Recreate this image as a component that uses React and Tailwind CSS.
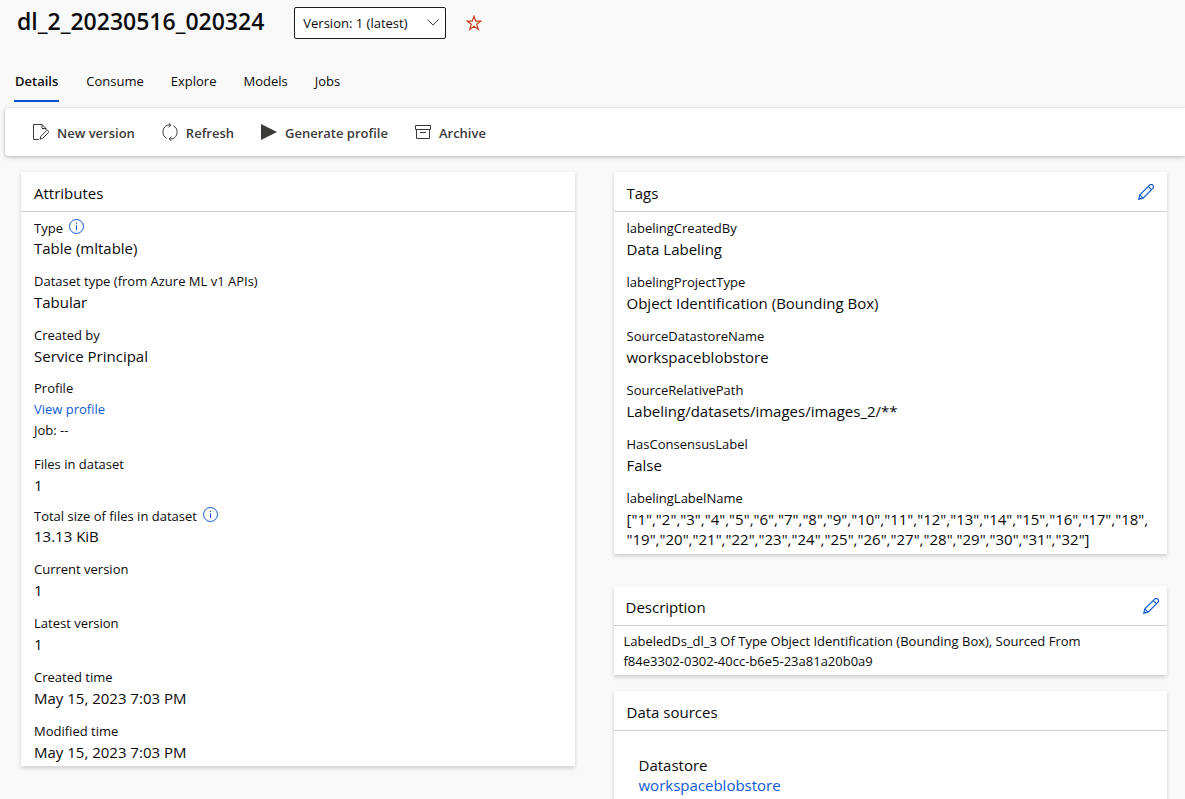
import React, { Fragment } from "react";

const tabs = ["Details", "Consume", "Explore", "Models", "Jobs"];

const tags = [
  ["labelingCreatedBy", "Data Labeling"],
  ["labelingProjectType", "Object Identification (Bounding Box)"],
  ["SourceDatastoreName", "workspaceblobstore"],
  ["SourceRelativePath", "Labeling/datasets/images/images_2/**"],
  ["HasConsensusLabel", "False"],
];

const labelNames = Array.from({ length: 32 }, (_, i) => `"${i + 1}"`);

function NewVersionIcon() {
  return (
    <svg className="size-4" viewBox="0 0 16 16" fill="none" stroke="currentColor" aria-hidden="true">
      <path d="M6 15.500H.5V.5h8.500l4 4v1.500" />
      <path d="M9 .5v4h4" />
      <path d="M7 15.200l.8-2.800 5.600-5.600a1.300 1.300 0 0 1 1.900 1.900l-5.600 5.600z" />
    </svg>
  );
}

function RefreshIcon() {
  return (
    <svg className="h-[18px] w-4" viewBox="0 0 16 18" fill="none" stroke="currentColor" aria-hidden="true">
      <path d="M4.600 15.200A7.200 7.200 0 0 1 5.800 2.100h3M11.400 2.800A7.200 7.200 0 0 1 10.200 15.900h-3" />
      <path d="M6.600 0l2.300 2.100-2.300 2.300M9.400 18l-2.300-2.100 2.300-2.300" />
    </svg>
  );
}

function PlayIcon() {
  return (
    <svg className="size-4" viewBox="0 0 16 16" fill="currentColor" aria-hidden="true">
      <path d="M0 0l16 8-16 8z" />
    </svg>
  );
}

function ArchiveIcon() {
  return (
    <svg className="h-[14px] w-4" viewBox="0 0 16 14" fill="none" stroke="currentColor" aria-hidden="true">
      <path d="M.5.5h15v4H.5zM1.500 4.500v9h13v-9M5 7.500h6" />
    </svg>
  );
}

function PencilIcon() {
  return (
    <svg className="size-4" viewBox="0 0 16 16" fill="none" stroke="currentColor" strokeWidth="1.200" aria-hidden="true">
      <path d="M.8 15.200l1.100-4.300L11.600 1.200a2.200 2.200 0 0 1 3.200 3.200L5.100 14.100z" />
      <path d="M10.300 2.600l3.100 3.100M1.900 10.900l3.200 3.200" />
    </svg>
  );
}

function InfoButton({ label }) {
  return (
    <button type="button" aria-label={label} className="-mt-1 text-[#0f5bd7]">
      <svg className="size-[15px]" viewBox="0 0 15 15" fill="none" stroke="currentColor" aria-hidden="true">
        <circle cx="7.500" cy="7.500" r="7" />
        <path d="M7.500 6.200v5M7.500 3.800v1.200" />
      </svg>
    </button>
  );
}

function Command({ icon, children }) {
  return (
    <button type="button" className="flex items-center gap-2 text-[13px] leading-5 font-semibold text-[#3b3a39]">
      {icon}
      <span className="pt-0.5">{children}</span>
    </button>
  );
}

function Card({ title, onEdit, children, className = "", headerClassName = "px-[13px]" }) {
  return (
    <section className={`bg-white shadow-[0_2px_4px_rgba(0,0,0,0.18)] ${className}`}>
      <header className={`flex h-10 items-center justify-between border-b border-[#d0d0d0] pt-0.5 ${headerClassName}`}>
        <h2 className="text-[15px] leading-5">{title}</h2>
        {onEdit && (
          <button type="button" aria-label={onEdit} className="mb-0.5 text-[#0f5bd7]">
            <PencilIcon />
          </button>
        )}
      </header>
      {children}
    </section>
  );
}

function Field({ label, info, children }) {
  return (
    <div>
      <dt className={`flex items-center gap-[6px] text-[13px] ${info ? "leading-[19px]" : "leading-[22px]"}`}>
        {label}
        {info && <InfoButton label={info} />}
      </dt>
      <dd className="text-[15px] leading-5">{children}</dd>
    </div>
  );
}

export default function App() {
  return (
    <div className="h-screen overflow-hidden bg-[#f9f9f9] font-['Open_Sans','Noto_Sans',sans-serif] text-[#0b0b0b]">
      <header className="flex items-center pt-[7px] pl-[17px]">
        <h1 className="pb-1 text-[23px] leading-7 font-semibold">dl_2_20230516_020324</h1>
        <div className="relative ml-[30px]">
          <select
            aria-label="Version"
            className="block h-8 w-[152px] appearance-none rounded-xs border border-[#1b1b1b] bg-white pt-0.5 pl-2 text-[13px]"
          >
            <option>Version: 1 (latest)</option>
          </select>
          <svg
            className="pointer-events-none absolute top-3 right-[7px] h-[7px] w-3"
            viewBox="0 0 12 7"
            fill="none"
            stroke="#444"
            aria-hidden="true"
          >
            <path d="M.5.500L6 6l5.500-5.500" />
          </svg>
        </div>
        <button type="button" aria-label="Add to favorites" className="ml-5 text-[#c9401f]">
          <svg className="size-4" viewBox="0 0 16 16" fill="none" stroke="currentColor" strokeWidth="1.200" aria-hidden="true">
            <path d="M8 1.200l1.700 4.900h5.200l-4.200 3.100 1.600 5.200L8 11.300l-4.300 3.100 1.600-5.200-4.200-3.100h5.200z" />
          </svg>
        </button>
      </header>

      <nav className="mt-6 flex gap-[27px] pl-[14px] text-[13px] leading-5">
        {tabs.map((tab, i) => (
          <a
            key={tab}
            href={`#${tab.toLowerCase()}`}
            aria-current={i === 0 ? "page" : undefined}
            className={i === 0 ? "border-b-2 border-[#0b53ce] px-px pt-2 pb-[9px] font-semibold" : "pt-2 pb-[9px]"}
          >
            {tab}
          </a>
        ))}
      </nav>

      <div className="mt-[6px] ml-[5px] flex h-12 items-center gap-[27px] rounded-l bg-white pl-7 shadow-[0_1px_4px_rgba(0,0,0,0.28)]">
        <Command icon={<NewVersionIcon />}>New version</Command>
        <Command icon={<RefreshIcon />}>Refresh</Command>
        <Command icon={<PlayIcon />}>Generate profile</Command>
        <Command icon={<ArchiveIcon />}>Archive</Command>
      </div>

      <main className="mt-4 grid grid-cols-2 items-start gap-[39px] pr-[18px] pl-[21px]">
        <Card title="Attributes">
          <dl className="flex flex-col gap-3 px-[13px] pt-[7px] pb-1">
            <Field label="Type" info="About type">Table (mltable)</Field>
            <Field label="Dataset type (from Azure ML v1 APIs)">Tabular</Field>
            <Field label="Created by">Service Principal</Field>
            <div className="text-[13px] leading-[21px]">
              <dt>Profile</dt>
              <dd>
                <a href="#profile" className="text-[#0f5bd7]">View profile</a>
              </dd>
              <dd>Job: --</dd>
            </div>
            <Field label="Files in dataset">1</Field>
            <Field label="Total size of files in dataset" info="About total size">13.13 KiB</Field>
            <Field label="Current version">1</Field>
            <Field label="Latest version">1</Field>
            <Field label="Created time">May 15, 2023 7:03 PM</Field>
            <Field label="Modified time">May 15, 2023 7:03 PM</Field>
          </dl>
        </Card>

        <div>
          <Card title="Tags" onEdit="Edit tags">
            <dl className="flex flex-col gap-3 px-[13px] pt-[5px] pb-[5px]">
              {tags.map(([label, value]) => (
                <Field key={label} label={label}>{value}</Field>
              ))}
              <Field label="labelingLabelName">
                [
                {labelNames.map((name, i) => (
                  <Fragment key={name}>
                    {name}
                    {i < labelNames.length - 1 ? "," : "]"}
                    <wbr />
                  </Fragment>
                ))}
              </Field>
            </dl>
          </Card>

          <Card
            title="Description"
            onEdit="Edit description"
            className="mt-8"
            headerClassName="pr-2 pl-3"
          >
            <p className="px-[10px] pt-[5px] pb-1 text-[13px] leading-5">
              LabeledDs_dl_3 Of Type Object Identification (Bounding Box), Sourced From{" "}
              <span className="inline-block">f84e3302-0302-40cc-b6e5-23a81a20b0a9</span>
            </p>
          </Card>

          <Card title="Data sources" className="mt-4">
            <div className="px-[25px] py-6 text-[15px] leading-5">
              <p>Datastore</p>
              <a href="#datastore" className="text-[#0f5bd7]">workspaceblobstore</a>
            </div>
          </Card>
        </div>
      </main>
    </div>
  );
}
